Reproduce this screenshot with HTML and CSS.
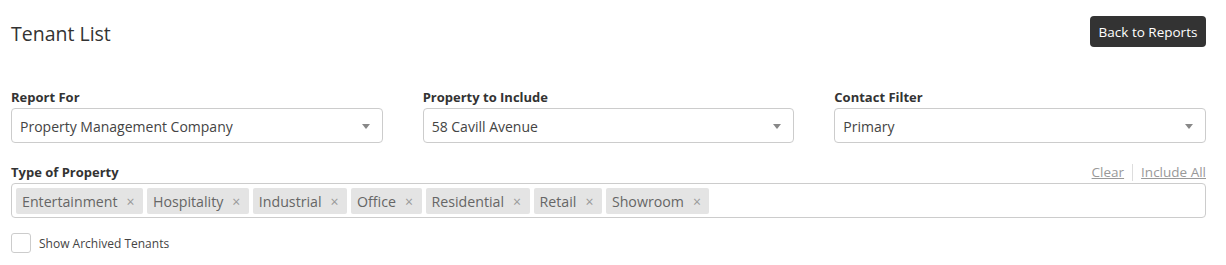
FILE: index.html
```html
<!DOCTYPE html>
<html>
<head>
<meta charset="utf-8">
<link rel="stylesheet" href="styles.css">
</head>
<body>
<div class="page">
  <div class="header">
    <h1 class="title">Tenant List</h1>
    <button class="btn-dark">Back to Reports</button>
  </div>
  <div class="fields">
    <div class="field">
      <label class="label">Report For</label>
      <div class="select"><span>Property Management Company</span><i class="arrow"></i></div>
    </div>
    <div class="field">
      <label class="label">Property to Include</label>
      <div class="select"><span>58 Cavill Avenue</span><i class="arrow"></i></div>
    </div>
    <div class="field">
      <label class="label">Contact Filter</label>
      <div class="select"><span>Primary</span><i class="arrow"></i></div>
    </div>
  </div>
  <div class="multi">
    <div class="multi-head">
      <label class="label">Type of Property</label>
      <div class="links"><a class="link">Clear</a><span class="sep"></span><a class="link">Include All</a></div>
    </div>
    <div class="tagbox">
      <span class="tag">Entertainment<span class="x">×</span></span>
      <span class="tag">Hospitality<span class="x">×</span></span>
      <span class="tag">Industrial<span class="x">×</span></span>
      <span class="tag">Office<span class="x">×</span></span>
      <span class="tag">Residential<span class="x">×</span></span>
      <span class="tag">Retail<span class="x">×</span></span>
      <span class="tag">Showroom<span class="x">×</span></span>
    </div>
  </div>
  <label class="check"><span class="box"></span><span class="check-text">Show Archived Tenants</span></label>
</div>
</body>
</html>
```
FILE: styles.css
```css
html, body {
  margin: 0;
  padding: 0;
  background: #fff;
}
body {
  font-family: "Open Sans", "Noto Sans", sans-serif;
  color: #333;
}
.page {
  padding: 16px 20px 0 11px;
}
.header {
  display: flex;
  justify-content: space-between;
  align-items: flex-start;
  height: 31px;
}
.title {
  margin: 4px 0 0 0;
  font-size: 19.5px;
  font-weight: 400;
  line-height: 28px;
  color: #333;
}
.btn-dark {
  height: 31px;
  width: 116px;
  padding: 0;
  border: none;
  border-radius: 4px;
  background: #333;
  color: #fff;
  font-family: inherit;
  font-size: 13.5px;
}
.fields {
  display: grid;
  grid-template-columns: repeat(3, 1fr);
  column-gap: 40px;
  margin-top: 39px;
}
.label {
  display: block;
  font-size: 13px;
  font-weight: 700;
  line-height: 22px;
  color: #333;
}
.select {
  height: 35px;
  box-sizing: border-box;
  border: 1px solid #ccc;
  border-radius: 4px;
  display: flex;
  align-items: center;
  justify-content: space-between;
  padding: 2px 12px 0 8px;
  font-size: 14px;
  color: #444;
}
.arrow {
  width: 0;
  height: 0;
  border-left: 4px solid transparent;
  border-right: 4px solid transparent;
  border-top: 5px solid #888;
  margin-top: -1px;
}
.multi {
  margin-top: 18px;
}
.multi-head {
  display: flex;
  justify-content: space-between;
  align-items: center;
}
.links {
  display: flex;
  align-items: center;
  font-size: 13.5px;
}
.link {
  color: #999;
  text-decoration: underline;
}
.sep {
  width: 1px;
  height: 17px;
  background: #ddd;
  margin: 0 8px;
}
.tagbox {
  height: 35px;
  box-sizing: border-box;
  border: 1px solid #ccc;
  border-radius: 4px;
  display: flex;
  align-items: center;
  gap: 4px;
  padding: 0 4px;
}
.tag {
  background: #e4e4e4;
  border-radius: 2px;
  height: 26px;
  display: flex;
  align-items: center;
  padding: 1px 8.5px 0 6px;
  box-sizing: border-box;
  font-size: 14.2px;
  color: #666;
}
.x {
  margin-left: 9px;
  font-size: 14px;
  color: #999;
}
.check {
  display: flex;
  align-items: center;
  margin-top: 15px;
}
.box {
  width: 20px;
  height: 20px;
  box-sizing: border-box;
  border: 1px solid #ccc;
  border-radius: 3px;
}
.check-text {
  margin-left: 8px;
  font-size: 12px;
  color: #444;
}
```
